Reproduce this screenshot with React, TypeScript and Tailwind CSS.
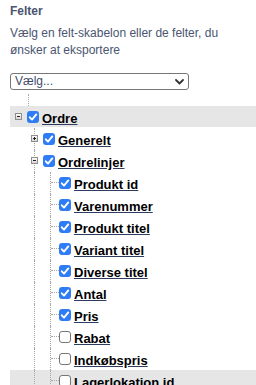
import React from "react";

const dotted = "border-l border-dotted border-[#a6a6a6]";

const Expander: React.FC<{ open?: boolean }> = ({ open = true }) => (
  <svg width="7" height="7" viewBox="0 0 7 7" className="block">
    <defs>
      <linearGradient id="exp" x1="0" y1="0" x2="0" y2="1">
        <stop offset="0" stopColor="#ffffff" />
        <stop offset="1" stopColor="#d2d2d2" />
      </linearGradient>
    </defs>
    <rect x="0.5" y="0.5" width="6" height="6" fill="url(#exp)" stroke="#8e8e8e" />
    <rect x="2" y="3" width="3" height="1" fill="#222" />
    {!open && <rect x="3" y="2" width="1" height="3" fill="#222" />}
  </svg>
);

const Checkbox: React.FC<{ checked?: boolean }> = ({ checked }) =>
  checked ? (
    <div className="mt-[5px] w-[12px] h-[12px] shrink-0 rounded-[3px] bg-[#2f7df6] flex items-center justify-center">
      <svg width="12" height="12" viewBox="0 0 12 12">
        <path d="M2.8 6.3 L5 8.6 L9.3 3.4" fill="none" stroke="#fff" strokeWidth="1.9" strokeLinecap="round" strokeLinejoin="round" />
      </svg>
    </div>
  ) : (
    <div className="mt-[5px] w-[12px] h-[12px] shrink-0 rounded-[3px] bg-white border border-[#767676]" />
  );

const Label: React.FC<{ children: React.ReactNode }> = ({ children }) => (
  <span className="ml-[3px] mt-[2px] leading-[21px] text-[13px] font-bold text-black underline decoration-[#2d3c5f] whitespace-nowrap">
    {children}
  </span>
);

const Row: React.FC<{ highlight?: boolean; children: React.ReactNode }> = ({ highlight, children }) => (
  <div
    className={
      highlight
        ? "flex items-start h-[22px] pl-[1px] bg-[linear-gradient(#e6e6e6_21px,transparent_21px)]"
        : "flex items-start h-[22px] pl-[1px]"
    }
  >
    {children}
  </div>
);

const Empty = () => <div className="w-[16px] h-[22px] shrink-0" />;

const VLine = () => (
  <div className="w-[16px] h-[22px] shrink-0 pl-[7px]">
    <div className={`h-full ${dotted}`} />
  </div>
);

const Connector = () => (
  <div className="w-[16px] h-[22px] shrink-0 flex pl-[7px]">
    <div className={`h-full ${dotted}`} />
    <div className="flex-1 mt-[10px] h-0 border-t border-dotted border-[#a6a6a6]" />
  </div>
);

const ExpanderCell: React.FC<{ open?: boolean; line?: boolean }> = ({ open, line }) => (
  <div className="w-[16px] h-[22px] shrink-0 grid">
    {line && <div className={`col-start-1 row-start-1 ml-[7px] h-full ${dotted}`} />}
    <div className="col-start-1 row-start-1 ml-[4px] mt-[7px] self-start justify-self-start">
      <Expander open={open} />
    </div>
  </div>
);

const fields = [
  { label: "Produkt id", checked: true },
  { label: "Varenummer", checked: true },
  { label: "Produkt titel", checked: true },
  { label: "Variant titel", checked: true },
  { label: "Diverse titel", checked: true },
  { label: "Antal", checked: true },
  { label: "Pris", checked: true },
  { label: "Rabat", checked: false },
  { label: "Indkøbspris", checked: false },
  { label: "Lagerlokation id", checked: false, highlight: true },
];

export default function App() {
  return (
    <div className="w-[256px] h-[385px] overflow-hidden bg-white pl-[10px] pt-[4px] font-['Liberation_Sans',Arial,sans-serif]">
      <h2 className="text-[12px] leading-[15px] font-bold text-[#4a5571]">Felter</h2>
      <p className="mt-[5.5px] text-[12px] leading-[17px] text-[#4a5571]">
        Vælg en felt-skabelon eller de felter, du ønsker at eksportere
      </p>
      <div className="relative mt-[14px] w-[179px]">
        <select className="appearance-none block w-full h-[17px] rounded-[3px] border border-[#767676] bg-white pl-[4px] pr-[16px] py-0 text-[12px] leading-[15px] text-[#3f4c69] font-['Liberation_Sans',Arial,sans-serif]">
          <option>Vælg...</option>
        </select>
        <svg width="9" height="6" viewBox="0 0 9 6" className="pointer-events-none absolute right-[5px] top-[6px]">
          <path d="M1 1 L4.5 4.5 L8 1" fill="none" stroke="#333" strokeWidth="1.8" strokeLinecap="round" strokeLinejoin="round" />
        </svg>
      </div>

      <div className="mt-[4.5px]">
        <div className="h-[12px] pl-[18px]">
          <div className={`h-full ${dotted}`} />
        </div>
        <Row highlight>
          <ExpanderCell open />
          <Checkbox checked />
          <Label>Ordre</Label>
        </Row>
        <Row>
          <Empty />
          <ExpanderCell open={false} line />
          <Checkbox checked />
          <Label>Generelt</Label>
        </Row>
        <Row>
          <Empty />
          <ExpanderCell open line />
          <Checkbox checked />
          <Label>Ordrelinjer</Label>
        </Row>
        {fields.map((f) => (
          <Row key={f.label} highlight={f.highlight}>
            <Empty />
            <VLine />
            <Connector />
            <Checkbox checked={f.checked} />
            <Label>{f.label}</Label>
          </Row>
        ))}
      </div>
    </div>
  );
}
